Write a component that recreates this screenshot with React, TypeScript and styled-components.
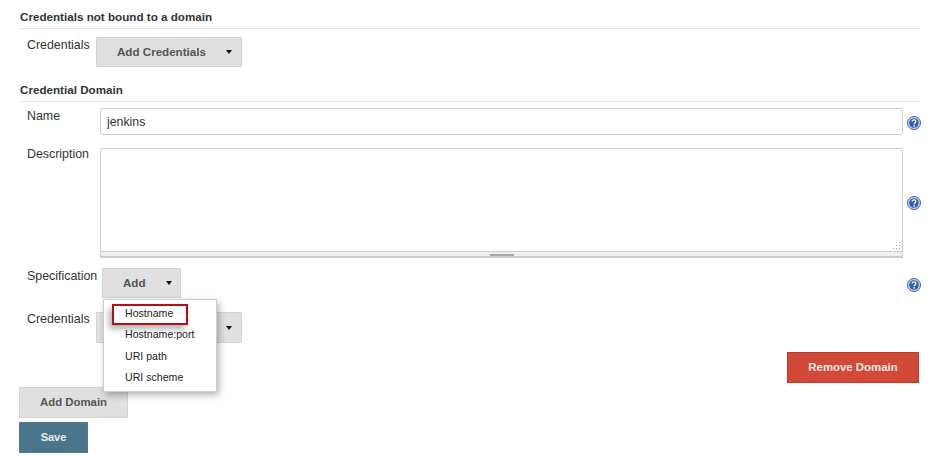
import styled, { createGlobalStyle } from 'styled-components';

const GlobalStyle = createGlobalStyle`
  html, body {
    margin: 0;
    padding: 0;
    background: #fff;
  }
  body {
    font-family: "Liberation Sans", Arial, sans-serif;
    font-size: 12px;
    color: #333;
  }
`;

function HelpIcon() {
  return (
    <HelpSvg viewBox="0 0 14 14" aria-hidden="true">
      <circle cx="7" cy="7" r="6.5" fill="#c9d8ea" stroke="#3a659f" strokeWidth="1" />
      <circle cx="7" cy="7" r="4.8" fill="#2f62a8" />
      <path d="M5.1 5.6c0-1.2.9-1.8 1.9-1.8s1.9.6 1.9 1.6c0 1.4-1.7 1.4-1.7 2.8" fill="none" stroke="#fff" strokeWidth="1.3" />
      <rect x="6.4" y="9.2" width="1.4" height="1.4" fill="#fff" />
    </HelpSvg>
  );
}

function ResizeGrip() {
  return (
    <GripSvg viewBox="0 0 9 9" aria-hidden="true">
      <g fill="#9a9a9a">
        <rect x="7" y="1" width="1" height="1" />
        <rect x="4" y="4" width="1" height="1" />
        <rect x="7" y="4" width="1" height="1" />
        <rect x="1" y="7" width="1" height="1" />
        <rect x="4" y="7" width="1" height="1" />
        <rect x="7" y="7" width="1" height="1" />
      </g>
    </GripSvg>
  );
}

export default function App() {
  return (
    <Page>
      <GlobalStyle />
      <SectionHeading>Credentials not bound to a domain</SectionHeading>
      <Row $top={8}>
        <Label $width={69}>Credentials</Label>
        <GreyButton $width={146}>
          <span>Add Credentials</span>
          <CaretMark />
        </GreyButton>
      </Row>

      <SectionHeading $top={17}>Credential Domain</SectionHeading>
      <Row $top={6}>
        <Label $width={73}>Name</Label>
        <TextInput defaultValue="jenkins" />
        <HelpSlot $height={29}>
          <HelpIcon />
        </HelpSlot>
      </Row>
      <Row $top={11}>
        <Label $width={73} $top={-2}>Description</Label>
        <TextAreaWrap>
          <TextArea />
          <ResizeGrip />
          <GripBar>
            <GripThumb />
          </GripBar>
        </TextAreaWrap>
        <HelpSlot $height={109}>
          <HelpIcon />
        </HelpSlot>
      </Row>
      <SpecRow>
        <Label $width={75}>Specification</Label>
        <GreyButton $width={79}>
          <span>Add</span>
          <CaretMark />
        </GreyButton>
        <Spacer />
        <HelpSlot $height={33}>
          <HelpIcon />
        </HelpSlot>
        <Menu>
          <MenuItem>Hostname</MenuItem>
          <MenuItem>Hostname:port</MenuItem>
          <MenuItem>URI path</MenuItem>
          <MenuItem>URI scheme</MenuItem>
          <Highlight />
        </Menu>
      </SpecRow>
      <Row $top={11}>
        <Label $width={69} $top={-1}>Credentials</Label>
        <GreyButton $width={146} $height={31}>
          <span>Add Credentials</span>
          <CaretMark />
        </GreyButton>
      </Row>
      <RemoveRow>
        <RemoveButton>Remove Domain</RemoveButton>
      </RemoveRow>
      <AddDomainButton>Add Domain</AddDomainButton>
      <SaveButton>Save</SaveButton>
    </Page>
  );
}

const Page = styled.div`
  width: 934px;
  height: 456px;
  box-sizing: border-box;
  padding: 11px 14px 0 19px;
  overflow: hidden;
`;

const SectionHeading = styled.div<{ $top?: number }>`
  margin-top: ${(p) => p.$top ?? 0}px;
  margin-left: 1px;
  padding-bottom: 5px;
  border-bottom: 1px solid #e4e4e4;
  font-size: 11.65px;
  line-height: 12px;
  font-weight: bold;
  color: #333;
`;

const Row = styled.div<{ $top: number }>`
  display: flex;
  align-items: flex-start;
  margin-top: ${(p) => p.$top}px;
  padding-left: 8px;
`;

const SpecRow = styled.div`
  position: relative;
  display: flex;
  align-items: flex-start;
  margin-top: 10px;
  padding-left: 8px;
`;

const Label = styled.label<{ $width: number; $top?: number }>`
  flex: none;
  width: ${(p) => p.$width}px;
  margin-top: ${(p) => p.$top ?? 0}px;
  padding-top: 1px;
  font-size: 12.4px;
  line-height: 14px;
  color: #333;
`;

const GreyButton = styled.button<{ $width: number; $height?: number }>`
  display: flex;
  align-items: center;
  justify-content: flex-start;
  gap: 20px;
  flex: none;
  box-sizing: border-box;
  width: ${(p) => p.$width}px;
  height: ${(p) => p.$height ?? 30}px;
  padding: 0 0 1px 20px;
  border: 1px solid #d4d4d4;
  background: #e0e0e0;
  font-family: inherit;
  font-size: 11.6px;
  font-weight: bold;
  color: #555;
`;

const CaretMark = styled.i`
  width: 0;
  height: 0;
  margin-top: 1px;
  border-left: 3px solid transparent;
  border-right: 3px solid transparent;
  border-top: 4px solid #111;
`;

const TextInput = styled.input`
  flex: 1;
  min-width: 0;
  box-sizing: border-box;
  height: 27px;
  padding: 0 6px;
  border: 1px solid #ccc;
  border-radius: 3px;
  font-family: inherit;
  font-size: 12.3px;
  color: #333;
  outline: none;
`;

const HelpSlot = styled.div<{ $height: number }>`
  flex: none;
  display: flex;
  align-items: center;
  justify-content: flex-end;
  width: 17px;
  height: ${(p) => p.$height}px;
`;

const HelpSvg = styled.svg`
  width: 14px;
  height: 14px;
  margin-right: -1px;
`;

const TextAreaWrap = styled.div`
  position: relative;
  flex: 1;
  min-width: 0;
  display: flex;
  flex-direction: column;
`;

const TextArea = styled.textarea`
  display: block;
  box-sizing: border-box;
  width: 100%;
  height: 104px;
  border: 1px solid #ccc;
  border-radius: 3px 3px 0 0;
  outline: none;
  resize: none;
`;

const GripSvg = styled.svg`
  position: absolute;
  right: 2px;
  bottom: 8px;
  width: 9px;
  height: 9px;
`;

const GripBar = styled.div`
  display: flex;
  justify-content: center;
  box-sizing: border-box;
  height: 6px;
  border-left: 1px solid #ccc;
  border-right: 1px solid #ccc;
  border-bottom: 2px solid #ccc;
  background: #f0f0f0;
  padding-top: 2px;
`;

const GripThumb = styled.div`
  width: 24px;
  height: 2px;
  background: #a8a8a8;
`;

const Spacer = styled.div`
  flex: 1;
`;

const Menu = styled.div`
  position: absolute;
  left: 84px;
  top: 31px;
  z-index: 2;
  box-sizing: border-box;
  width: 114px;
  height: 93px;
  padding-top: 3px;
  border: 1px solid #ccc;
  background: #fff;
  box-shadow: 2px 3px 7px rgba(0, 0, 0, 0.3);
`;

const MenuItem = styled.div`
  height: 21.3px;
  padding-left: 21px;
  font-size: 10.6px;
  line-height: 21px;
  color: #222;
`;

const Highlight = styled.div`
  position: absolute;
  left: 8px;
  top: 4px;
  box-sizing: border-box;
  width: 76px;
  height: 21px;
  border: 2px solid #b01016;
  box-shadow: -3px 4px 6px rgba(0, 0, 0, 0.3);
`;

const RemoveRow = styled.div`
  display: flex;
  justify-content: flex-end;
  margin-top: 9px;
  padding-right: 1px;
`;

const RemoveButton = styled.button`
  box-sizing: border-box;
  width: 132px;
  height: 31px;
  padding: 0 0 1px;
  border: 1px solid #c4392a;
  background: #d24939;
  font-family: inherit;
  font-size: 11.4px;
  font-weight: bold;
  color: #f8e8e6;
`;

const AddDomainButton = styled.button`
  display: block;
  box-sizing: border-box;
  width: 109px;
  height: 31px;
  margin-top: 4px;
  padding: 0 0 1px;
  border: 1px solid #d4d4d4;
  background: #e0e0e0;
  font-family: inherit;
  font-size: 11.4px;
  font-weight: bold;
  color: #555;
`;

const SaveButton = styled.button`
  display: block;
  box-sizing: border-box;
  width: 69px;
  height: 31px;
  margin-top: 4px;
  padding: 0 0 1px;
  border: 1px solid #4b7b90;
  background: #4b758b;
  font-family: inherit;
  font-size: 11px;
  font-weight: bold;
  color: #e8eef2;
`;
